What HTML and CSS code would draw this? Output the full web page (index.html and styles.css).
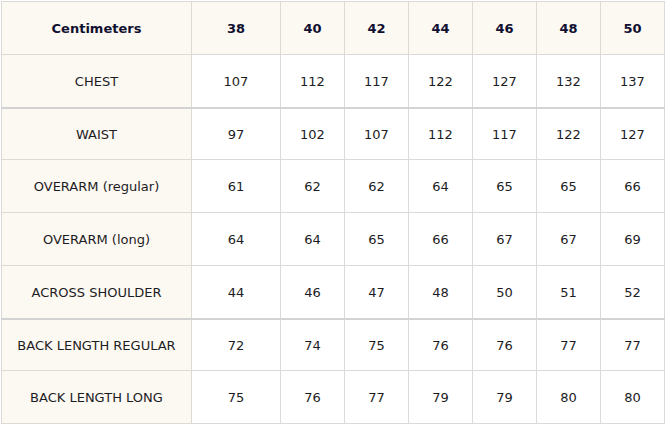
FILE: index.html
```html
<!DOCTYPE html>
<html>
<head>
<meta charset="utf-8">
<link rel="stylesheet" href="styles.css">
</head>
<body>
<table class="size-table">
  <colgroup>
    <col class="c-label"><col class="c-first"><col class="c-num"><col class="c-num"><col class="c-num"><col class="c-num"><col class="c-num"><col class="c-num">
  </colgroup>
  <thead>
    <tr class="row-head">
      <th class="label">Centimeters</th><th>38</th><th>40</th><th>42</th><th>44</th><th>46</th><th>48</th><th>50</th>
    </tr>
  </thead>
  <tbody>
    <tr class="row"><td class="label">CHEST</td><td>107</td><td>112</td><td>117</td><td>122</td><td>127</td><td>132</td><td>137</td></tr>
    <tr class="row row-short thick"><td class="label">WAIST</td><td>97</td><td>102</td><td>107</td><td>112</td><td>117</td><td>122</td><td>127</td></tr>
    <tr class="row"><td class="label">OVERARM (regular)</td><td>61</td><td>62</td><td>62</td><td>64</td><td>65</td><td>65</td><td>66</td></tr>
    <tr class="row"><td class="label">OVERARM (long)</td><td>64</td><td>64</td><td>65</td><td>66</td><td>67</td><td>67</td><td>69</td></tr>
    <tr class="row"><td class="label">ACROSS SHOULDER</td><td>44</td><td>46</td><td>47</td><td>48</td><td>50</td><td>51</td><td>52</td></tr>
    <tr class="row row-short thick"><td class="label">BACK LENGTH REGULAR</td><td>72</td><td>74</td><td>75</td><td>76</td><td>76</td><td>77</td><td>77</td></tr>
    <tr class="row"><td class="label">BACK LENGTH LONG</td><td>75</td><td>76</td><td>77</td><td>79</td><td>79</td><td>80</td><td>80</td></tr>
  </tbody>
</table>
</body>
</html>
```
FILE: styles.css
```css
html, body {
  margin: 0;
  padding: 0;
  background: #ffffff;
}
body {
  padding: 1px 0 0 1px;
  font-family: "DejaVu Sans", Verdana, sans-serif;
  font-size: 13px;
  color: #1c1c24;
}
.size-table {
  border-collapse: collapse;
  table-layout: fixed;
  width: 664px;
}
.c-label { width: 190px; }
.c-first { width: 89px; }
.c-num { width: 64px; }
.size-table th,
.size-table td {
  border: 1px solid #dcdad6;
  text-align: center;
  vertical-align: middle;
  padding: 0;
}
.row-head th {
  height: 52px;
  background: #fcf8f2;
  font-weight: bold;
  color: #101030;
}
.row td {
  height: 52px;
}
.row-short td {
  height: 50px;
}
.thick td {
  border-top: 2px solid #d3d3d3;
}
.size-table .label {
  background: #fcf8f2;
}
```
